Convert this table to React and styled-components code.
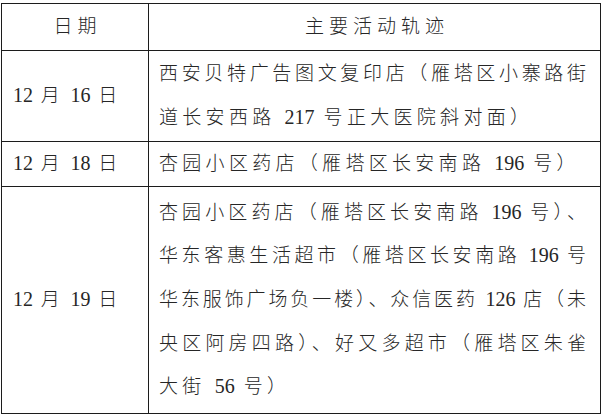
import React from "react"
import styled, { createGlobalStyle } from "styled-components"

const GlobalStyle = createGlobalStyle`
  body {
    margin: 0;
    background: #ffffff;
  }
`

const Page = styled.div`
  padding: 3px 1px 0 1px;
  width: 600px;
`

const Table = styled.table`
  width: 600px;
  border-collapse: collapse;
  table-layout: fixed;
  font-family: "Liberation Serif", "Noto Sans CJK SC", serif;
  font-size: 19px;
  font-weight: 300;
  color: #262626;
`

const HeadCell = styled.th`
  width: ${props => props.$width || "auto"};
  height: 45.5px;
  padding: 0;
  border: 1.5px solid #1c1c1c;
  font-weight: 300;
  text-align: center;
  letter-spacing: 5px;
  text-indent: 5px;
  line-height: 30px;
`

const DateCell = styled.td`
  height: ${props => props.$height};
  padding: 0 0 0 11px;
  border: 1.5px solid #1c1c1c;
  white-space: nowrap;
  letter-spacing: 3px;
  line-height: 30px;
`

const TextCell = styled.td`
  height: ${props => props.$height};
  padding: 0 12px 0 10px;
  border: 1.5px solid #1c1c1c;
`

const Line = styled.div`
  height: 43.7px;
  line-height: 43.7px;
  letter-spacing: ${props => (props.$full ? "2px" : "4.3px")};
  text-align: ${props => (props.$full ? "justify" : "left")};
  text-align-last: ${props => (props.$full ? "justify" : "auto")};
  text-justify: inter-character;
`

const Num = styled.span`
  font-size: 20px;
  letter-spacing: 0;
`

// wrap digit runs so the letter spacing of the CJK text does not spread them
const withNumbers = text =>
  text
    .split(/(\d+)/)
    .map((part, i) => (/^\d+$/.test(part) ? <Num key={i}>{part}</Num> : part))

const visits = [
  {
    date: "12 月 16 日",
    height: "90.5px",
    lines: [
      { text: "西安贝特广告图文复印店（雁塔区小寨路街", full: true },
      { text: "道长安西路 217 号正大医院斜对面）" },
    ],
  },
  {
    date: "12 月 18 日",
    height: "43.5px",
    lines: [{ text: "杏园小区药店（雁塔区长安南路 196 号）" }],
  },
  {
    date: "12 月 19 日",
    height: "226.5px",
    lines: [
      { text: "杏园小区药店（雁塔区长安南路 196 号）、", full: true },
      { text: "华东客惠生活超市（雁塔区长安南路 196 号", full: true },
      { text: "华东服饰广场负一楼）、众信医药 126 店（未", full: true },
      { text: "央区阿房四路）、好又多超市（雁塔区朱雀", full: true },
      { text: "大街 56 号）" },
    ],
  },
]

const App = () => (
  <Page>
    <GlobalStyle />
    <Table>
      <thead>
        <tr>
          <HeadCell $width="146px">日期</HeadCell>
          <HeadCell>主要活动轨迹</HeadCell>
        </tr>
      </thead>
      <tbody>
        {visits.map((visit, index) => (
          <tr key={index}>
            <DateCell $height={visit.height}>{withNumbers(visit.date)}</DateCell>
            <TextCell $height={visit.height}>
              {visit.lines.map((line, i) => (
                <Line key={i} $full={line.full}>
                  {withNumbers(line.text)}
                </Line>
              ))}
            </TextCell>
          </tr>
        ))}
      </tbody>
    </Table>
  </Page>
)

export default App
